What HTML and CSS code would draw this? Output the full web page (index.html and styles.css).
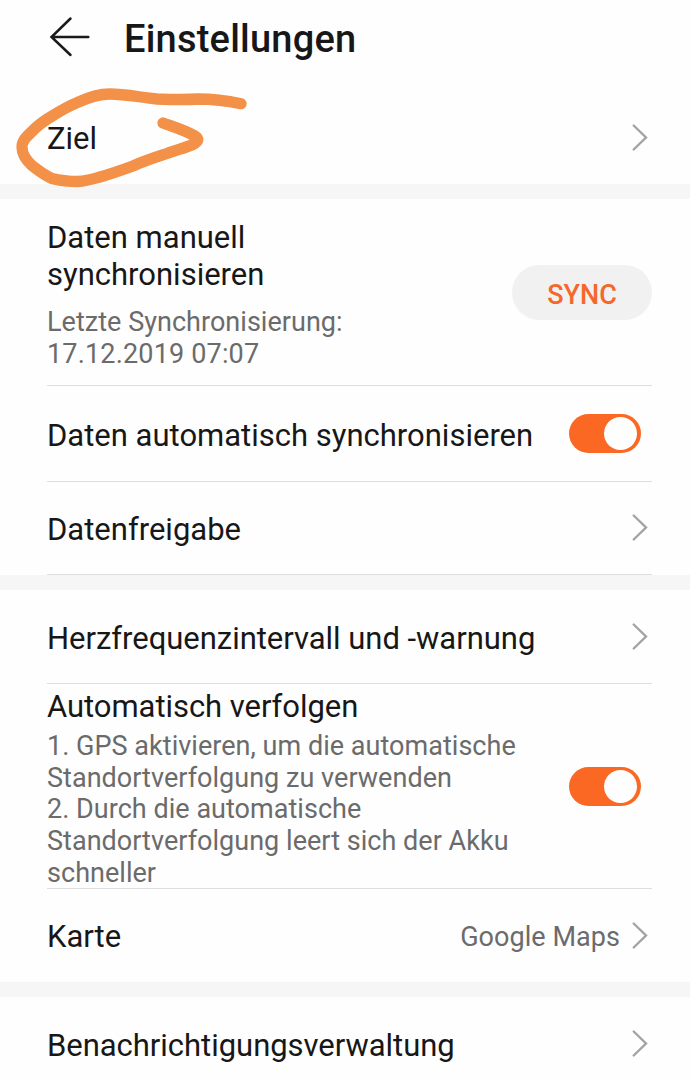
FILE: index.html
```html
<!DOCTYPE html>
<html lang="de">
<head>
<meta charset="utf-8">
<title>Einstellungen</title>
<link rel="stylesheet" href="styles.css">
</head>
<body>
<svg class="defs" width="0" height="0" aria-hidden="true">
  <symbol id="chevron" viewBox="0 0 18 30"><path d="M2.7 2.500 15 14.500 2.700 26.500" fill="none" stroke="#a3a3a3" stroke-width="2.400" stroke-linecap="round" stroke-linejoin="miter"/></symbol>
</svg>
<main class="screen">
  <header class="header">
    <svg class="back" viewBox="0 0 42 42"><path d="M22.500 2.500 3.500 21 22.500 39M3.500 21H40.300" fill="none" stroke="#1a1a1a" stroke-width="2.500" stroke-linecap="round"/></svg>
    <h1 class="heading">Einstellungen</h1>
  </header>

  <section class="group">
    <div class="row row-goal">
      <span class="label">Ziel</span>
      <svg class="chevron"><use href="#chevron"/></svg>
    </div>
    <svg class="scribble" viewBox="0 0 250 110"><path d="M241 23.700C226 20.500 212 19 198 19C184 20 170 19.500 157 19C141 17.500 125 14 110 14C98 14 87 18 77 22.700C66 27 57 33 48 38.500C43 42 38 45 33 50.500C26 57 22 61 22 67C22 75 27 81 32 85.500C38 90 44 95 52 98.500C60 100.500 69 101.500 78 101.500C87 101 93 99 100 97C111 94 122 90 133 86C144 81 155 77.500 167 73.500C176 70 185 68 193 64.500Q202 60 194 55.500C185 50.500 174 47 163 43" fill="none" stroke="#f39149" stroke-width="11.300" stroke-linecap="round" stroke-linejoin="round"/></svg>
  </section>

  <section class="group">
    <div class="row row-manual">
      <div class="copy copy-manual">
        <span class="label">Daten manuell<br>synchronisieren</span>
        <span class="note">Letzte Synchronisierung:<br><span class="stamp">17.12.2019 07:07</span></span>
      </div>
      <button class="sync">SYNC</button>
    </div>
    <div class="row row-auto line">
      <span class="label">Daten automatisch synchronisieren</span>
      <span class="toggle"><span class="knob"></span></span>
    </div>
    <div class="row row-share line line-end">
      <span class="label">Datenfreigabe</span>
      <svg class="chevron"><use href="#chevron"/></svg>
    </div>
  </section>

  <section class="group">
    <div class="row row-heart">
      <span class="label">Herzfrequenzintervall und -warnung</span>
      <svg class="chevron"><use href="#chevron"/></svg>
    </div>
    <div class="row row-track line">
      <div class="copy copy-track">
        <span class="label">Automatisch verfolgen</span>
        <span class="note">1. GPS aktivieren, um die automatische<br>Standortverfolgung zu verwenden<br>2. Durch die automatische<br>Standortverfolgung leert sich der Akku<br>schneller</span>
      </div>
      <span class="toggle"><span class="knob"></span></span>
    </div>
    <div class="row row-map line">
      <span class="label">Karte</span>
      <span class="value">Google Maps</span>
      <svg class="chevron"><use href="#chevron"/></svg>
    </div>
  </section>

  <section class="group">
    <div class="row row-notify">
      <span class="label">Benachrichtigungsverwaltung</span>
      <svg class="chevron"><use href="#chevron"/></svg>
    </div>
  </section>
</main>
</body>
</html>
```
FILE: styles.css
```css
* { box-sizing: border-box; }
body { margin: 0; background: #fefefe; font-family: Roboto, sans-serif; }
.defs { display: block; height: 0; }
.screen { width: 690px; height: 1080px; overflow: hidden; color: #171717; }
.header { height: 92px; display: flex; align-items: flex-start; padding: 16px 0 0 48px; }
.back { width: 42px; height: 42px; flex: none; }
.heading { margin: 0 0 0 34px; font-size: 38px; line-height: 46px; font-weight: 500; letter-spacing: 0.22px; white-space: nowrap; }
.group { position: relative; }
.group + .group { border-top: 15px solid #f6f6f6; }
.row { margin: 0 38px 0 47px; display: flex; align-items: center; justify-content: space-between; }
.line { border-top: 1px solid #dedede; }
.line-end { border-bottom: 1px solid #dedede; }
.label { display: block; font-size: 31px; line-height: 37px; white-space: nowrap; }
.note { display: block; font-size: 27px; line-height: 31.700px; color: #6b6b6b; letter-spacing: 0.03px; white-space: nowrap; }
.stamp { letter-spacing: 0.17px; }
.chevron { width: 18px; height: 30px; flex: none; margin-right: 3px; }
.row-goal { height: 92px; }
.row-goal .label { padding-top: 1px; }
.row-manual { height: 186px; align-items: flex-start; }
.copy-manual { padding-top: 20px; }
.copy-manual .note { margin-top: 14px; }
.row-auto { height: 96px; }
.row-auto .label { padding-top: 3px; }
.row-share { height: 94px; }
.row-share .label { padding-top: 2px; }
.row-heart { height: 93px; }
.row-heart .label, .row-notify .label { padding-top: 3px; letter-spacing: -0.03px; }
.row-track { height: 205px; }
.copy-track { align-self: flex-start; padding-top: 4px; }
.copy-track .label { letter-spacing: -0.05px; }
.copy-track .note { margin-top: 6px; }
.row-map { height: 94px; }
.row-map .label, .row-map .value { padding-top: 2px; }
.row-notify { height: 93px; }
.value { margin-left: auto; margin-right: 11px; font-size: 27px; line-height: 32px; letter-spacing: 0.05px; color: #6b6b6b; }
.sync { width: 140px; height: 55px; margin-top: 66px; border: 0; border-radius: 28px; background: #f1f1f1; color: #f4682b; font: 500 27px/55px Roboto, sans-serif; padding: 3px 0 0; }
.toggle { display: flex; justify-content: flex-end; align-items: center; width: 72px; height: 39px; margin-right: 11px; padding-right: 4px; border-radius: 20px; background: #fb6824; flex: none; }
.knob { width: 33px; height: 33px; border-radius: 50%; background: #fefefe; }
.scribble { position: absolute; left: 0; top: -12px; width: 250px; height: 110px; z-index: 1; }
```
